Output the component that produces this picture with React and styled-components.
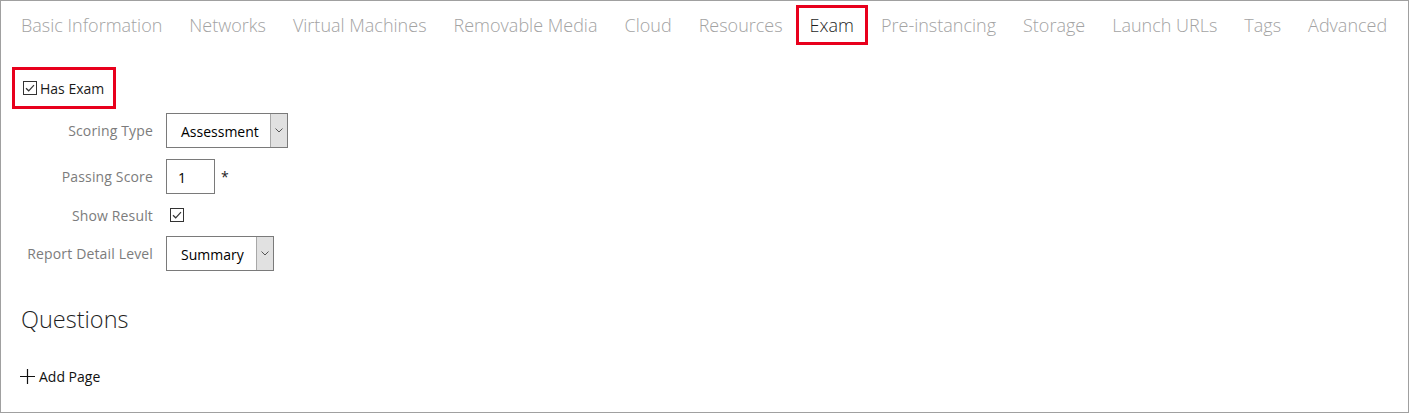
import React from 'react';
import styled, {createGlobalStyle} from 'styled-components';

const GlobalStyle = createGlobalStyle`
    html, body {
        margin: 0;
        padding: 0;
        background: #ffffff;
    }
    body {
        font-family: "Open Sans", "Noto Sans", sans-serif;
    }
`;

const Frame = styled.div`
    box-sizing: border-box;
    width: 1409px;
    height: 413px;
    border: 1px solid #a0a0a0;
    background: #ffffff;
    overflow: hidden;
`;

const TabBar = styled.nav`
    display: flex;
    gap: 5px;
    padding: 7px 0 0 9px;
`;

const Tab = styled.span`
    padding: 5px 11px;
    font-size: 18px;
    font-weight: 300;
    line-height: 24px;
    color: ${({$active}) => ($active ? '#1f1f1f' : '#a3a3a3')};
    outline: ${({$active}) => ($active ? '3px solid #e8001c' : 'none')};
    white-space: nowrap;
`;

const Body = styled.section`
    display: flex;
    flex-direction: column;
    align-items: flex-start;
    padding: 25px 0 0 11px;
`;

const Highlight = styled.label`
    display: inline-flex;
    align-items: center;
    gap: 3px;
    border: 3px solid #e8001c;
    padding: 0 9px 0 8px;
    height: 36px;
    font-size: 14px;
    color: #1a1a1a;
`;

const Form = styled.div`
    display: grid;
    grid-template-columns: 141px auto;
    column-gap: 13px;
    row-gap: 11px;
    align-items: center;
    margin-top: 4px;
`;

const Label = styled.span`
    justify-self: end;
    font-size: 14px;
    letter-spacing: 0.15px;
    color: #7c7c7c;
    white-space: nowrap;
`;

const Field = styled.div`
    display: flex;
    align-items: center;
    gap: 5px;
    min-height: ${({$short}) => ($short ? '20px' : '35px')};
    padding-left: ${({$short}) => ($short ? '4px' : '0')};
`;

const Select = styled.div`
    box-sizing: border-box;
    display: flex;
    width: ${({$width}) => $width}px;
    height: 35px;
    border: 1px solid #7a7a7a;
    background: #fff;
`;

const SelectValue = styled.span`
    flex: 1;
    display: flex;
    align-items: center;
    padding: 2px 0 0 14px;
    font-size: 14px;
    color: #000;
`;

const SelectButton = styled.span`
    width: 16px;
    display: flex;
    align-items: center;
    justify-content: center;
    background: #e1e1e1;
    border-left: 1px solid #a8a8a8;
`;

const Input = styled.div`
    box-sizing: border-box;
    width: 49px;
    height: 35px;
    border: 1px solid #7a7a7a;
    display: flex;
    align-items: center;
    padding: 2px 0 0 11px;
    font-size: 14px;
    color: #000;
`;

const Required = styled.span`
    font-size: 14px;
    color: #222;
    margin-left: 1px;
`;

const Heading = styled.h2`
    margin: 31px 0 0 9px;
    font-size: 23.5px;
    font-weight: 300;
    line-height: 34px;
    color: #1f1f1f;
`;

const AddLink = styled.a`
    display: flex;
    align-items: center;
    gap: 4px;
    margin: 31px 0 0 8px;
    font-size: 14px;
    color: #111;
    cursor: pointer;
`;

const CheckBox = () => (
    <svg width="14" height="14" viewBox="0 0 14 14">
        <rect x="0.5" y="0.5" width="13" height="13" fill="#fff" stroke="#333"/>
        <path d="M3 7.2 L5.7 9.8 L11 4.2" fill="none" stroke="#333" strokeWidth="1.2"/>
    </svg>
);

const Chevron = () => (
    <svg width="8" height="5" viewBox="0 0 8 5">
        <path d="M0.5 0.5 L4 4 L7.5 0.5" fill="none" stroke="#555" strokeWidth="1"/>
    </svg>
);

const Plus = () => (
    <svg width="15" height="15" viewBox="0 0 15 15">
        <path d="M7.5 0 V15 M0 7.5 H15" stroke="#111" strokeWidth="1.2"/>
    </svg>
);

const tabs = [
    'Basic Information', 'Networks', 'Virtual Machines', 'Removable Media', 'Cloud',
    'Resources', 'Exam', 'Pre-instancing', 'Storage', 'Launch URLs', 'Tags', 'Advanced',
];

const Dropdown = ({value, width}) => (
    <Select $width={width}>
        <SelectValue>{value}</SelectValue>
        <SelectButton><Chevron/></SelectButton>
    </Select>
);

export default function App() {
    return (
        <>
            <GlobalStyle/>
            <Frame>
                <TabBar>
                    {tabs.map(t => (
                        <Tab key={t} $active={t === 'Exam'}>{t}</Tab>
                    ))}
                </TabBar>
                <Body>
                    <Highlight>
                        <CheckBox/>
                        Has Exam
                    </Highlight>
                    <Form>
                        <Label>Scoring Type</Label>
                        <Field><Dropdown value="Assessment" width={122}/></Field>

                        <Label>Passing Score</Label>
                        <Field>
                            <Input>1</Input>
                            <Required>*</Required>
                        </Field>

                        <Label>Show Result</Label>
                        <Field $short><CheckBox/></Field>

                        <Label>Report Detail Level</Label>
                        <Field><Dropdown value="Summary" width={108}/></Field>
                    </Form>
                    <Heading>Questions</Heading>
                    <AddLink><Plus/>Add Page</AddLink>
                </Body>
            </Frame>
        </>
    );
}
